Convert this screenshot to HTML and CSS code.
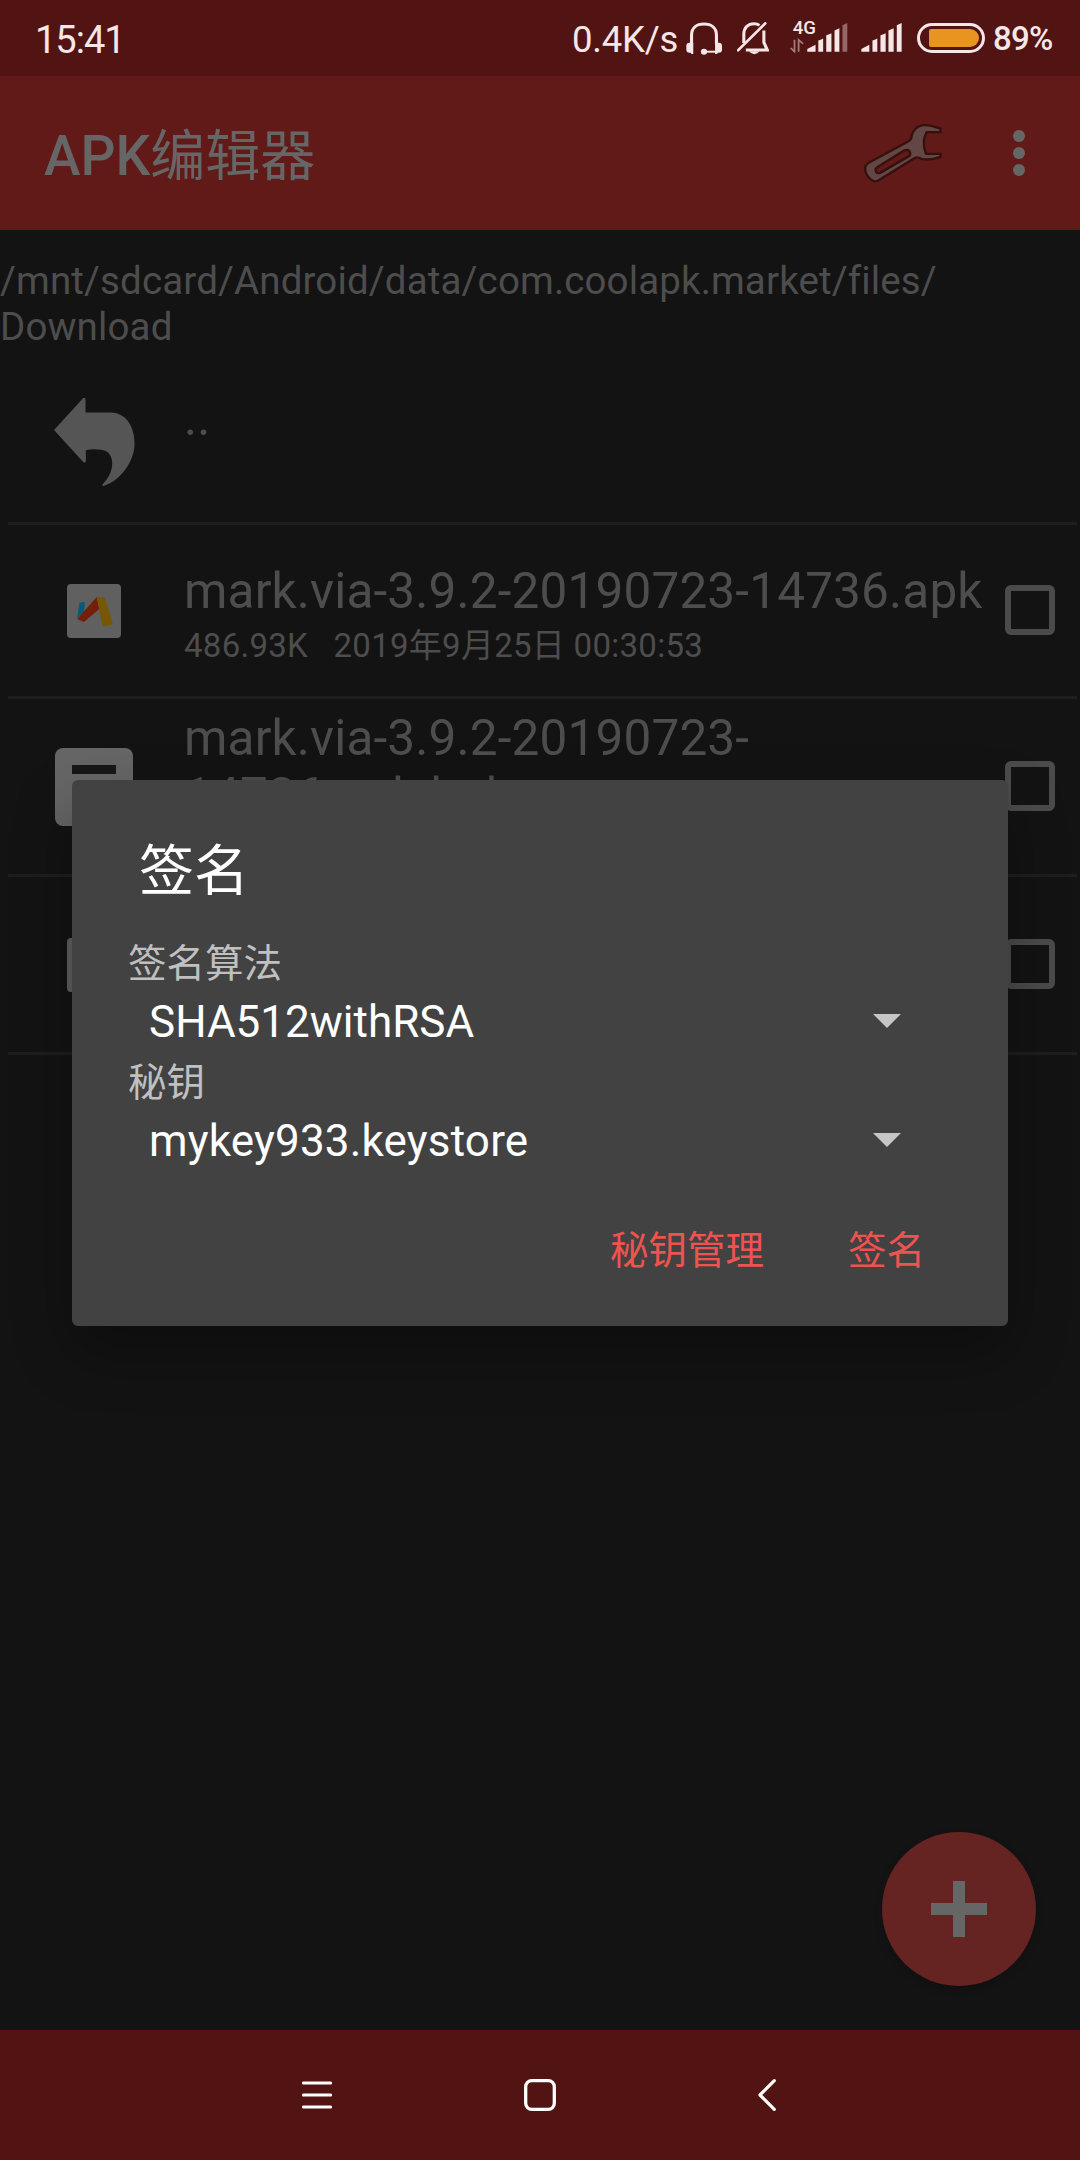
FILE: index.html
```html
<!DOCTYPE html>
<html lang="zh-CN">
<head>
<meta charset="utf-8">
<title>APK编辑器</title>
<link rel="stylesheet" href="styles.css">
</head>
<body>
<div class="screen">
  <header class="status">
    <span class="clock">15:41</span>
    <span class="speed">0.4K/s</span>
    <svg class="s-headset" viewBox="423 64 104 100" preserveAspectRatio="none">
      <path d="M439 132V104C439 82 454 70 475 70S511 82 511 104V132" fill="none" stroke="currentColor" stroke-width="9"/>
      <path d="M444 127h-11a9 9 0 0 0-9 9v12q0 9 9 9h3q1 4 5 4h3zM507 127h11q9 0 9 9v12q0 9-9 9h-3q-1 4-5 4h-3z" fill="currentColor"/>
      <path d="M475 154h35" stroke="currentColor" stroke-width="6"/><circle cx="475" cy="154" r="9" fill="currentColor"/>
    </svg>
    <svg class="s-bell" viewBox="572 64 94 100" preserveAspectRatio="none">
      <path d="M592 128V102C592 82 604 69 622 69Q632 69 638 74M651 90V126L661 149H598" fill="none" stroke="currentColor" stroke-width="9"/>
      <path d="M575 150L655 68" stroke="currentColor" stroke-width="8" stroke-linecap="round"/>
      <path d="M607 153h31q-6 9-15 9t-16-9z" fill="currentColor"/>
    </svg>
    <svg class="s-mobile" viewBox="725 30 168 130" preserveAspectRatio="none">
      <text x="733" y="104" font-size="54" font-weight="500">4G</text>
      <path d="M738 120V156L727 145M750 156V120L763 132" fill="none" stroke="currentColor" stroke-width="5" opacity=".5"/>
      <path d="M775 156v-8l24-13v21zM807 156v-34q6-1 14-6v40zM830 156v-50q6-1 15-6v56zM854 156v-64l14-7v71z" fill="currentColor"/>
      <path d="M877 156V76l14-7v87z" fill="currentColor" opacity=".4"/>
    </svg>
    <svg class="s-signal" viewBox="931 60 118 100" preserveAspectRatio="none">
      <path d="M932 156v-8l23-13v21zM964 156v-34q6-1 14-6v40zM987 156v-50q6-1 15-6v56zM1010 156v-64l15-7v71zM1034 156V76l14-7v87z" fill="currentColor"/>
    </svg>
    <span class="battery"><span class="level"></span></span>
    <span class="percent">89%</span>
  </header>

  <div class="appbar">
    <h1><b>APK</b>编辑器</h1>
    <svg class="wrench" viewBox="930 360 250 200" preserveAspectRatio="none">
      <path fill-rule="evenodd" d="M945 503Q946 494 954 488L1070 424Q1080 419 1080 408Q1086 382 1110 376Q1128 373 1164 386V396H1124Q1108 425 1122 461H1164V470Q1132 482 1108 476Q1098 468 1088 474L982 541Q973 547 961 537Q944 522 945 503ZM979 502L1058 451Q1067 447 1072 451Q1079 461 1074 467L990 517Q978 522 976 513Q973 507 979 502Z" fill="#624745" stroke="#36100e" stroke-width="7"/>
    </svg>
    <div class="more"><i></i><i></i><i></i></div>
  </div>

  <main>
    <p class="path">/mnt/sdcard/Android/data/com.coolapk.market/files/<br>Download</p>
    <div class="row up">
      <svg class="back" viewBox="155 465 240 275" preserveAspectRatio="none">
        <path d="M158 567L242 472Q249 467 249 476V514H322C365 514 391 555 391 607C391 660 350 718 303 733Q295 737 299 728C320 705 327 685 326 662C324 635 307 625 285 625Q266 623 250 627V658Q249 669 241 661Z" fill="#555"/>
      </svg>
      <span class="name">..</span>
    </div>
    <div class="row first">
      <div class="icon via">
        <svg viewBox="195 192 156 162" preserveAspectRatio="none">
          <path d="M231 248l16-2-3 30-20 18z" fill="#085877"/>
          <path d="M224 297L281 231l7 36-44 39z" fill="#741f08"/>
          <path d="M281 231l23 1 24 81-30 7z" fill="#765703"/>
        </svg>
      </div>
      <div class="info">
        <div class="name">mark.via-3.9.2-20190723-14736.apk</div>
        <div class="meta">486.93K&nbsp;&nbsp; 2019年9月25日 00:30:53</div>
      </div>
      <span class="check"></span>
    </div>
    <div class="row second">
      <div class="icon doc"><i></i></div>
      <div class="info">
        <div class="name">mark.via-3.9.2-20190723-<br>14736.apk.bak</div>
        <div class="meta"></div>
      </div>
      <span class="check"></span>
    </div>
    <div class="row third">
      <div class="icon via"></div>
      <div class="info"></div>
      <span class="check"></span>
    </div>
  </main>

  <nav>
    <svg class="n-menu" viewBox="0 0 30 32"><path d="M1.5 4h27M1.5 16h27M1.5 28h27" stroke="#fff" stroke-width="3.2" stroke-linecap="round"/></svg>
    <svg class="n-home" viewBox="0 0 32 32"><rect x="1.7" y="1.7" width="28.6" height="28.6" rx="6" fill="none" stroke="#fff" stroke-width="3.3"/></svg>
    <svg class="n-back" viewBox="0 0 18 32"><path d="M16.3 1.7L2 16l14.3 14.3" fill="none" stroke="#fff" stroke-width="3.2" stroke-linecap="round" stroke-linejoin="round"/></svg>
  </nav>

  <button class="fab"><svg viewBox="0 0 56 56"><path d="M28 0v56M0 28h56" stroke="#666" stroke-width="12"/></svg></button>

  <section class="dialog">
    <h2>签名</h2>
    <label>签名算法</label>
    <div class="select"><span>SHA512withRSA</span><i class="caret"></i></div>
    <label>秘钥</label>
    <div class="select key"><span>mykey933.keystore</span><i class="caret"></i></div>
    <div class="actions"><span>秘钥管理</span><span>签名</span></div>
  </section>
</div>
</body>
</html>
```
FILE: styles.css
```css
* { box-sizing: border-box; }
body { margin: 0; background: #131313; font-family: Roboto, "Noto Sans CJK SC", sans-serif; font-variant-ligatures: none; }
h1, h2, p { margin: 0; font-weight: 400; }
svg { display: block; flex: none; }
.screen { position: relative; width: 1080px; height: 2160px; display: flex; flex-direction: column; overflow: hidden; }

.status { height: 76px; background: #521313; color: #f5e7e7; display: flex; align-items: flex-start; padding-left: 35px; white-space: nowrap; }
.status > * { flex: none; }
.clock { width: 537px; font-size: 38px; line-height: 46px; padding-top: 17px; letter-spacing: -1px; }
.speed { width: 114px; font-size: 36.5px; line-height: 46px; padding-top: 17px; letter-spacing: -.2px; }
.s-headset { width: 36px; height: 33px; margin-top: 22px; }
.s-bell { width: 32px; height: 33px; margin: 22px 0 0 15px; }
.s-mobile { width: 58px; height: 43px; margin: 10px 0 0 21px; fill: currentColor; }
.s-signal { width: 41px; height: 33px; margin: 20px 0 0 13px; }
.battery { width: 68px; height: 30px; margin: 23px 0 0 15px; border: 3px solid currentColor; border-radius: 15px; padding: 3px 3px 3px 9px; display: flex; }
.level { flex: 1; background: #e79421; border-radius: 2px 9px 9px 2px; }
.percent { font-size: 33px; line-height: 40px; margin: 19px 0 0 8px; font-weight: 500; letter-spacing: -.8px; }

.appbar { height: 154px; flex: none; background: #611a17; display: flex; align-items: center; padding-left: 44px; }
.appbar h1 { flex: 1; font-size: 55px; line-height: 64px; padding-top: 6px; color: #666; }
.appbar b { font-weight: 500; }
.wrench { width: 86px; height: 67px; margin: 0 67px 0 0; }
.more { width: 12px; margin-right: 55px; display: grid; gap: 5px; }
.more i { width: 12px; height: 12px; border-radius: 50%; background: #666; }

main { flex: 1; color: #4d4d4d; }
.path { font-size: 38.5px; line-height: 46px; padding-top: 28px; height: 132px; white-space: nowrap; letter-spacing: .14px; }
.row { display: flex; align-items: center; margin: 0 3px 0 8px; border-bottom: 3px solid #1e1e1e; }
.up { height: 163px; }
.up .name { padding-bottom: 48px; }
.first { height: 174px; }
.second, .third { height: 178px; }
.back { width: 83px; height: 92px; margin: 0 48px 0 45px; }
.name { font-size: 49.5px; line-height: 58px; white-space: nowrap; letter-spacing: .16px; }
.meta { font-size: 33px; line-height: 39px; height: 39px; margin: 6px 0 -6px; white-space: nowrap; letter-spacing: .28px; }
.info { flex: 1; }
.check { width: 50px; height: 50px; border: 6px solid #4b4b4b; border-radius: 6px; margin: 0 22px 2px 0; }
.icon { flex: none; background: #606060; }
.via { width: 54px; height: 54px; border-radius: 4px; margin: 0 63px 0 59px; }
.via svg { width: 54px; height: 54px; }
.doc { width: 78px; height: 78px; border-radius: 8px; margin: 0 51px 0 47px; padding: 17px; background: #666; }
.doc i { display: block; height: 9px; background: #171717; }

nav { height: 130px; background: #521313; display: flex; align-items: center; padding-left: 302px; }
.n-menu { width: 30px; height: 32px; }
.n-home { width: 32px; height: 32px; margin: 0 202px 0 192px; }
.n-back { width: 18px; height: 32px; }

.fab { position: absolute; right: 44px; bottom: 174px; width: 154px; height: 154px; border: 0; border-radius: 50%; background: #652321; display: grid; place-items: center; box-shadow: 0 4px 8px rgba(0,0,0,.15); }
.fab svg { width: 56px; height: 56px; }

.dialog { position: absolute; left: 72px; top: 780px; width: 936px; height: 546px; border-radius: 6px; background: #424242; color: #fff; padding: 59px 66px 0 56px; box-shadow: 0 26px 60px rgba(0,0,0,.3); }
.dialog h2 { font-size: 55px; line-height: 64px; padding-left: 11px; height: 102px; }
.dialog label { display: block; font-size: 38.5px; line-height: 45px; height: 45px; color: #c0c0c0; }
.select { height: 74px; display: flex; align-items: center; justify-content: space-between; padding: 0 41px 2px 21px; font-size: 44px; }
.key { letter-spacing: .18px; }
.caret { width: 28px; height: 14px; margin-bottom: 2px; background: #c6c6c6; clip-path: polygon(0 0, 100% 0, 50% 100%); }
.actions { display: flex; justify-content: flex-end; gap: 84px; padding: 49px 17px 0 0; font-size: 38.5px; line-height: 45px; color: #ef5350; }
```
